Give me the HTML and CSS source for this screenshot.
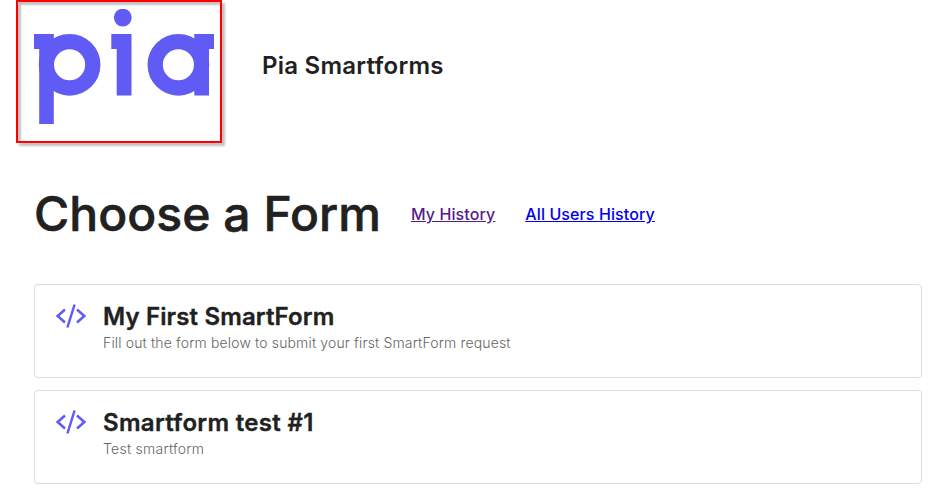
FILE: index.html
```html
<!DOCTYPE html>
<html lang="en">
<head>
<meta charset="utf-8">
<title>Pia Smartforms</title>
<link rel="stylesheet" href="styles.css">
</head>
<body>
<header class="header">
  <div class="brand">
    <svg class="logo" viewBox="34 9 180 115" role="img" aria-label="pia">
      <g fill="none" stroke="currentColor" stroke-width="15.3">
        <circle cx="69.6" cy="64.8" r="23.2"/>
        <circle cx="178.4" cy="64.8" r="23.2"/>
      </g>
      <g fill="currentColor">
        <path d="M34 34h19.8v90H39.2V49H34z"/>
        <circle cx="122.8" cy="17.6" r="8.9"/>
        <path d="M111.3 34h20.2v61.5h-14.8V49h-5.4z"/>
        <path d="M194.3 34H214v15h-5v46.500h-14.700z"/>
      </g>
    </svg>
  </div>
  <div class="site-name">Pia Smartforms</div>
</header>
<main class="main">
  <div class="heading">
    <h1 class="title">Choose a Form</h1>
    <a class="link link-visited" href="#">My History</a>
    <a class="link" href="#">All Users History</a>
  </div>
  <div class="forms">
    <section class="card">
      <svg class="code-icon" viewBox="0 0 30 24"><path d="M9 5.500 1.700 12 9 18.500M21 5.500 28.300 12 21 18.500M18.600.5 11.400 23.500"/></svg>
      <div>
        <h2 class="card-title">My First SmartForm</h2>
        <p class="card-text card-text-tight">Fill out the form below to submit your first SmartForm request</p>
      </div>
    </section>
    <section class="card">
      <svg class="code-icon" viewBox="0 0 30 24"><path d="M9 5.500 1.700 12 9 18.500M21 5.500 28.300 12 21 18.500M18.600.5 11.400 23.500"/></svg>
      <div>
        <h2 class="card-title card-title-wide">Smartform test #1</h2>
        <p class="card-text">Test smartform</p>
      </div>
    </section>
  </div>
</main>
</body>
</html>
```
FILE: styles.css
```css
* { box-sizing: border-box; }
body {
  margin: 0;
  background: #fff;
  color: #212121;
  font-family: Inter, "Liberation Sans", sans-serif;
}
h1, h2, p { margin: 0; }
.header {
  display: flex;
  gap: 40px;
  padding-left: 16px;
  height: 143px;
}
.brand {
  width: 206px;
  height: 143px;
  padding: 7px 0 0 16px;
  border: 2px solid #f00;
  box-shadow: 3px 3px 2px rgba(0, 0, 0, .24), inset 3px 3px 2px rgba(0, 0, 0, .24);
}
.logo { display: block; width: 180px; height: 115px; color: #605bf5; }
.site-name {
  margin-top: 50px;
  font-size: 24px;
  line-height: 32px;
  font-weight: 600;
  letter-spacing: .25px;
}
.main { padding: 41px 11px 0 34px; }
.heading { display: flex; align-items: center; height: 60px; }
.title {
  width: 347px;
  margin-right: 30px;
  font-size: 48px;
  line-height: 60px;
  font-weight: 500;
  letter-spacing: .05px;
  -webkit-text-stroke: .6px #212121;
  white-space: nowrap;
}
.link {
  margin-right: 30px;
  font-size: 16px;
  line-height: 24px;
  font-weight: 500;
  letter-spacing: .1px;
  color: #00e;
  white-space: nowrap;
}
.link-visited { color: #551a8b; }
.forms { display: grid; gap: 12px; margin-top: 40px; }
.card {
  display: flex;
  gap: 17px;
  height: 94px;
  padding: 16px 21px;
  border: 1px solid #dcdcdc;
  border-radius: 4px;
}
.code-icon {
  width: 30px;
  height: 24px;
  margin-top: 3px;
  fill: none;
  stroke: #605bf5;
  stroke-width: 2.5;
}
.card-title {
  font-size: 24px;
  line-height: 32px;
  font-weight: 600;
  letter-spacing: .14px;
  -webkit-text-stroke: .35px #212121;
}
.card-title-wide { letter-spacing: .32px; }
.card-text {
  font-size: 14px;
  line-height: 20px;
  font-weight: 300;
  letter-spacing: .25px;
  color: #666;
}
.card-text-tight { letter-spacing: .15px; }
```
